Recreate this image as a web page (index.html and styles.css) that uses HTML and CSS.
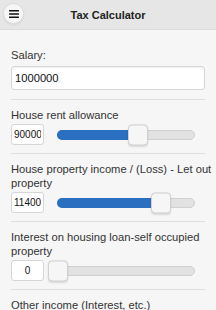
FILE: index.html
```html
<!DOCTYPE html>
<html lang="en">
<head>
    <meta charset="UTF-8">
    <meta name="viewport" content="width=device-width, initial-scale=1.0">
    <title>Tax Calculator</title>
    <link rel="stylesheet" href="styles.css">
</head>
<body>
    <header class="topbar">
        <button class="menu-btn" aria-label="Menu">
            <svg width="10" height="8" viewBox="0 0 10 8">
                <rect x="0" y="0" width="10" height="1.6" rx="0.5" fill="#111"/>
                <rect x="0" y="3.2" width="10" height="1.6" rx="0.5" fill="#111"/>
                <rect x="0" y="6.4" width="10" height="1.6" rx="0.5" fill="#111"/>
            </svg>
        </button>
        <h1>Tax Calculator</h1>
    </header>

    <main class="form">
        <div class="field field-first">
            <label>Salary:</label>
            <input type="text" class="text-input" value="1000000">
        </div>

        <div class="field">
            <label>House rent allowance</label>
            <div class="slider-row">
                <input type="text" class="num-input" value="90000">
                <div class="track">
                    <div class="fill" style="width: 59%"></div>
                    <span class="thumb" style="left: 59%"></span>
                </div>
            </div>
        </div>

        <div class="field">
            <label>House property income / (Loss) - Let out property</label>
            <div class="slider-row">
                <input type="text" class="num-input" value="114000">
                <div class="track">
                    <div class="fill" style="width: 76%"></div>
                    <span class="thumb" style="left: 76%"></span>
                </div>
            </div>
        </div>

        <div class="field">
            <label>Interest on housing loan-self occupied property</label>
            <div class="slider-row">
                <input type="text" class="num-input" value="0">
                <div class="track">
                    <div class="fill" style="width: 0%"></div>
                    <span class="thumb" style="left: 0%"></span>
                </div>
            </div>
        </div>

        <div class="field">
            <label>Other income (Interest, etc.)</label>
            <div class="slider-row">
                <input type="text" class="num-input" value="0">
                <div class="track">
                    <div class="fill" style="width: 0%"></div>
                    <span class="thumb" style="left: 0%"></span>
                </div>
            </div>
        </div>
    </main>
</body>
</html>
```

FILE: styles.css
```css
* {
    margin: 0;
    padding: 0;
    box-sizing: border-box;
}

html, body {
    overflow: hidden;
}

body {
    font-family: 'Liberation Sans', Arial, sans-serif;
    background-color: #f6f6f6;
    color: #333;
}

/* Header bar */
.topbar {
    position: relative;
    height: 30px;
    display: flex;
    align-items: center;
    justify-content: center;
    background-color: #e6e6e6;
    border-bottom: 1px solid #dcdcdc;
}

.topbar h1 {
    font-size: 11px;
    font-weight: bold;
    color: #222;
}

.menu-btn {
    position: absolute;
    left: 3px;
    top: 3px;
    width: 21px;
    height: 21px;
    border-radius: 50%;
    border: 1px solid #dedede;
    background-color: #f6f6f6;
    display: flex;
    align-items: center;
    justify-content: center;
    box-shadow: 0 1px 2px rgba(0, 0, 0, 0.08);
}

.menu-btn svg {
    display: block;
}

/* Form */
.form {
    padding: 0 11px;
}

.field {
    padding: 8px 0 8px;
    border-bottom: 1px solid #dedede;
}

.field-first {
    padding-top: 18px;
    padding-bottom: 9px;
}

.field label {
    display: block;
    margin-right: -8px;
    font-size: 11.2px;
    line-height: 14px;
    color: #333;
}

.text-input {
    display: block;
    width: 100%;
    height: 24px;
    margin-top: 4px;
    padding: 0 3px;
    font-family: inherit;
    font-size: 11.2px;
    color: #111;
    background-color: #fff;
    border: 1px solid #d6d6d6;
    border-radius: 3px;
    box-shadow: inset 0 1px 2px rgba(0, 0, 0, 0.06);
    outline: none;
}

.slider-row {
    display: flex;
    align-items: center;
    margin-top: 2px;
    height: 21px;
}

.num-input {
    width: 33px;
    height: 21px;
    padding: 0 2px;
    font-family: inherit;
    font-size: 10px;
    text-align: center;
    color: #111;
    background-color: #fff;
    border: 1px solid #d6d6d6;
    border-radius: 3px;
    outline: none;
}

.track {
    position: relative;
    width: 138px;
    height: 10px;
    margin-left: 13px;
    background-color: #e2e2e2;
    border: 1px solid #d0d0d0;
    border-radius: 5px;
}

.fill {
    margin: -1px 0 0 -1px;
    height: 10px;
    background-color: #2a6fc0;
    border-radius: 5px 0 0 5px;
}

.thumb {
    position: absolute;
    top: 50%;
    width: 20px;
    height: 21px;
    transform: translate(-50%, -50%);
    background-color: #f6f6f6;
    border: 1px solid #d0d0d0;
    border-radius: 4px;
    box-shadow: 0 1px 2px rgba(0, 0, 0, 0.12);
}
```
